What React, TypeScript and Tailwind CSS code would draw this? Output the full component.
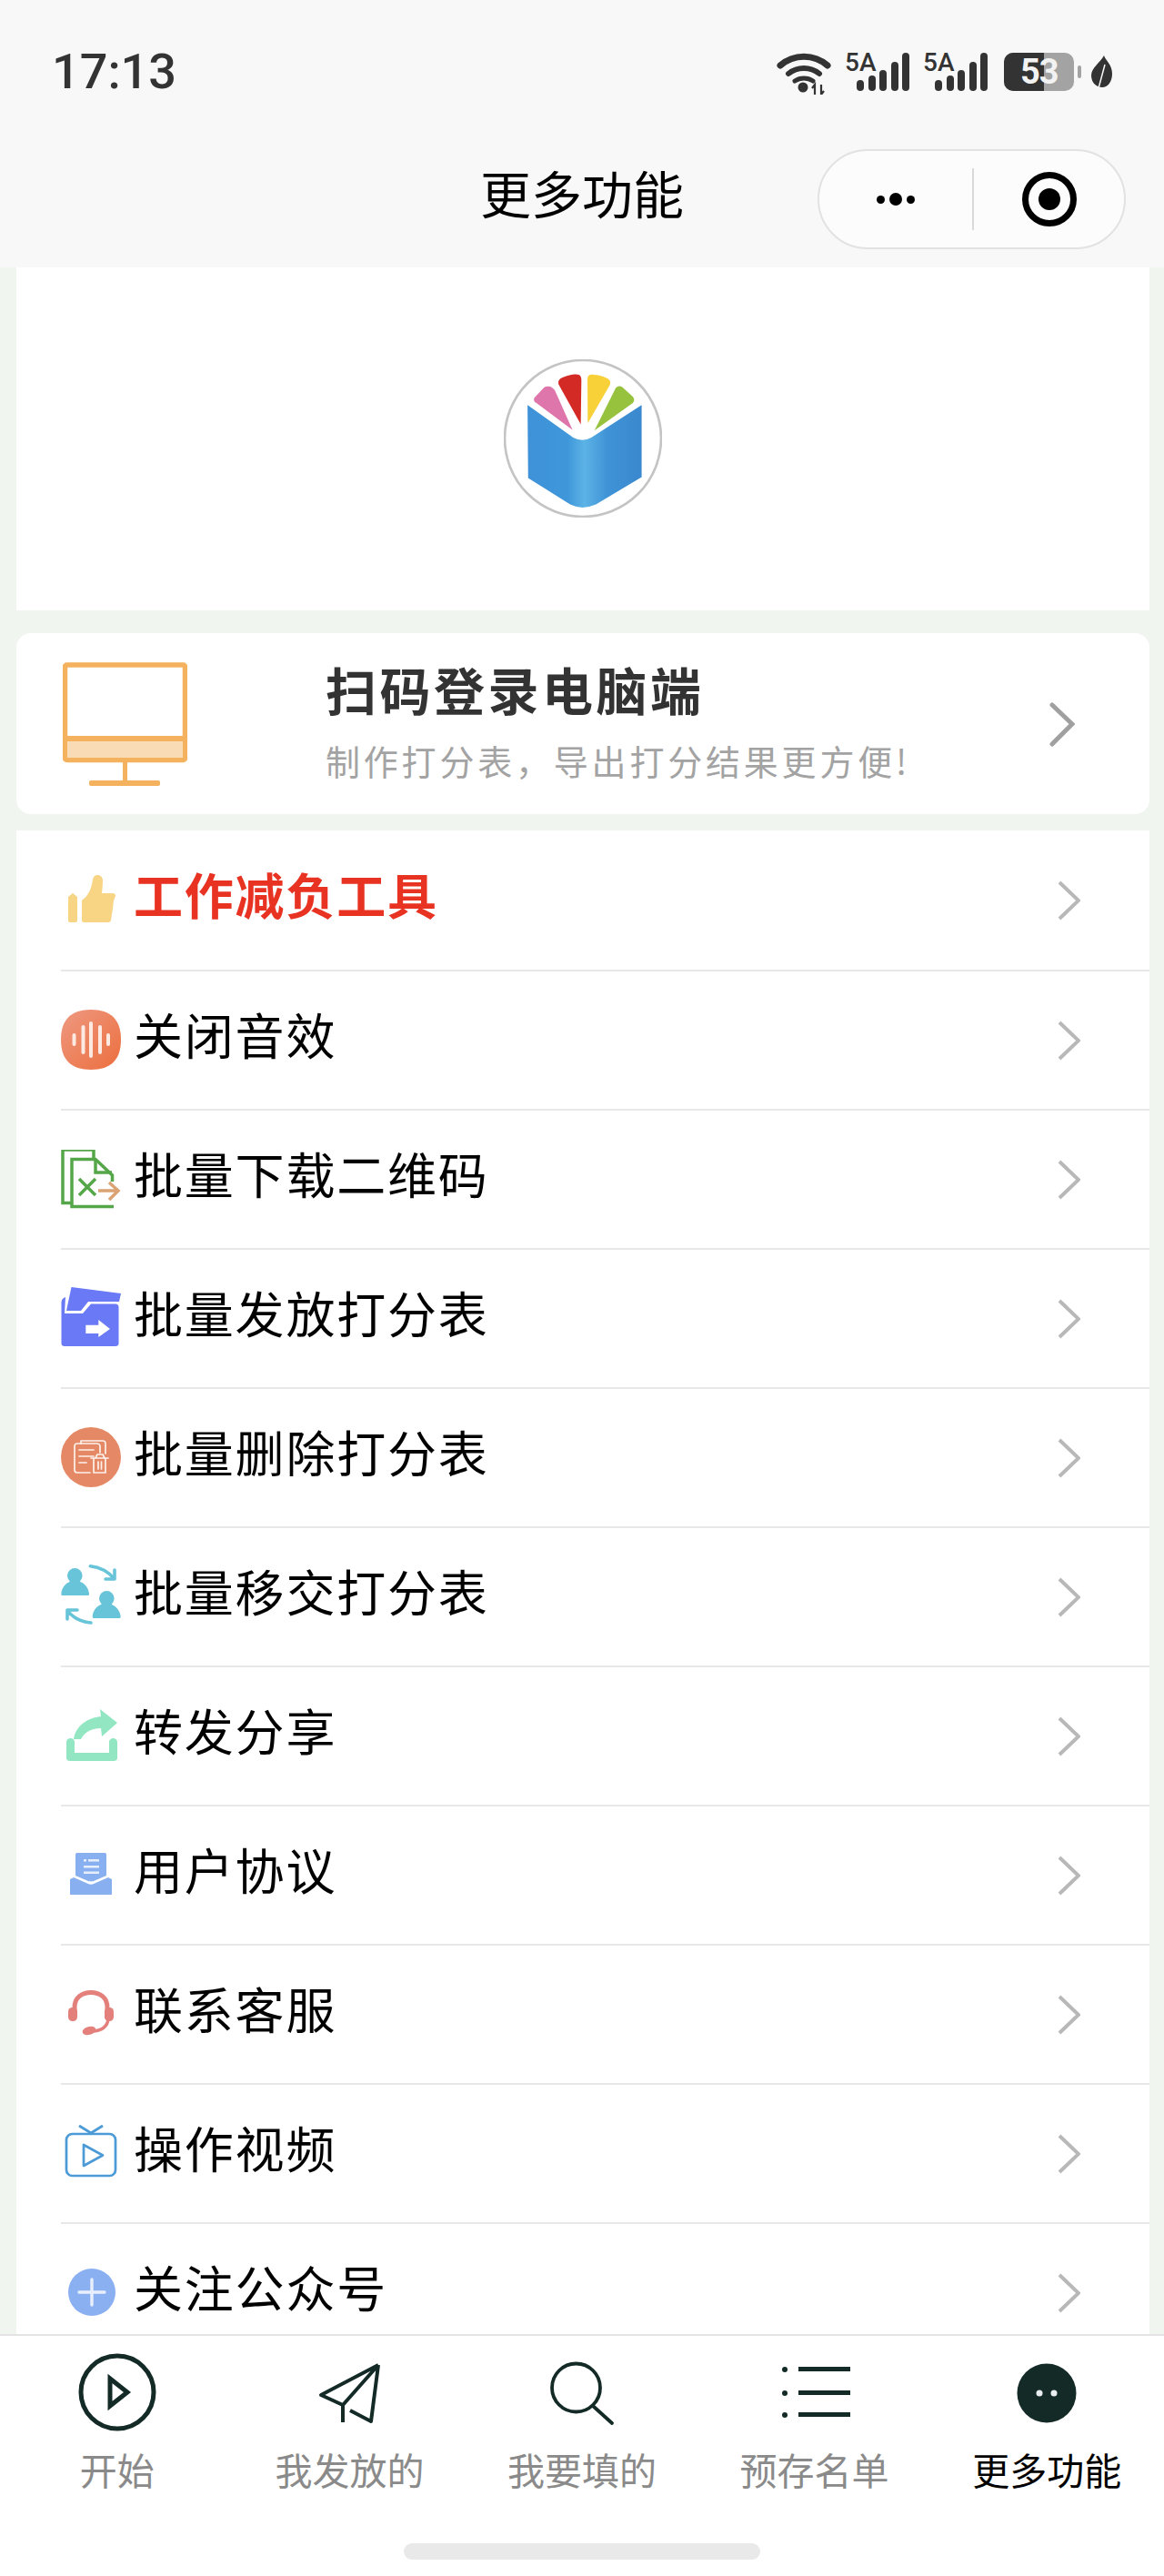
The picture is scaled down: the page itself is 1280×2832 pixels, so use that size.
import type { ReactNode } from 'react';

const CJK = 'font-["Noto_Sans_CJK_SC","Noto_Sans",sans-serif]';

function Chevron({ large = false }: { large?: boolean }) {
  if (large) {
    return (
      <svg viewBox="0 0 28 49" className="h-[49px] w-[28px]" fill="none" stroke="#a0a0a0" strokeWidth="5">
        <path d="M3 3l22 21L3 46" strokeLinecap="round" strokeLinejoin="miter" />
      </svg>
    );
  }
  return (
    <svg viewBox="0 0 25 44" className="h-[44px] w-[25px]" fill="none" stroke="#b8b8b8" strokeWidth="4">
      <path d="M2 2l21 20L2 42" strokeLinejoin="miter" />
    </svg>
  );
}

function ThumbIcon() {
  return (
    <svg viewBox="0 0 66 66" className="h-[66px] w-[66px]" fill="#f7d585">
      <path d="M8 29l5-4 5 4v26c0 1-1 2-2 2h-6c-1 0-2-1-2-2z" />
      <path d="M23 33c6-5 10-10 12-23 .5-3 2-5 5-5s6 2 6 6c0 5-.500 10-1 14h12c2 0 3 1 3 3l-2 5-1 9-1 6-1 7c-.5 1-1.500 2-3 2H25c-1 0-2-1-2-2z" />
    </svg>
  );
}

function SoundIcon() {
  return (
    <svg viewBox="0 3 66 66" className="h-[66px] w-[66px] overflow-visible">
      <defs>
        <linearGradient id="snd" x1="0" y1="0" x2="1" y2="1">
          <stop offset="0" stopColor="#ee9880" />
          <stop offset="1" stopColor="#ec6f3e" />
        </linearGradient>
      </defs>
      <path d="M33 2c22 0 33 11 33 33S55 68 33 68 0 57 0 35 11 2 33 2z" fill="url(#snd)" />
      <g fill="#fbe9e2">
        <rect x="12.500" y="28" width="4" height="14" rx="2" />
        <rect x="22.500" y="19" width="4" height="32" rx="2" />
        <rect x="31" y="15" width="4" height="40" rx="2" />
        <rect x="41" y="19" width="4" height="32" rx="2" />
        <rect x="50" y="28" width="4" height="14" rx="2" />
      </g>
    </svg>
  );
}

function ExcelIcon() {
  return (
    <svg viewBox="0 2 66 66" className="h-[66px] w-[66px]" fill="none">
      <path d="M11 60.500H2V2h34v10" stroke="#55a648" strokeWidth="3.500" />
      <path d="M58 64.500H12V12.500h26L56.500 30v7" stroke="#55a648" strokeWidth="3.500" />
      <path d="M38 12v15h18" stroke="#55a648" strokeWidth="3.500" />
      <path d="M20 34l18 18M38 34L20 52" stroke="#55a648" strokeWidth="3.500" />
      <path d="M41 47h22M53 38l10 9-10 10" stroke="#dba373" strokeWidth="3.500" />
    </svg>
  );
}

function FolderIcon() {
  return (
    <svg viewBox="0 0 66 66" className="h-[66px] w-[66px] overflow-visible">
      <path d="M11.500-2L66 5l-2 9H30l-8 10H6z" fill="#6a79f5" />
      <path d="M5 9C2 10 .5 12 .5 15v45c0 2 1.500 3 3.500 3h56c2 0 3.500-1 3.500-3V20c0-2-1.500-3.500-3.500-3.500H33L24 27H4z" fill="#6a79f5" />
      <path d="M27.300 39.700h14V34L54 44l-12.700 9v-4h-14z" fill="#fff" />
    </svg>
  );
}

function TrashDocIcon() {
  return (
    <svg viewBox="0 3 66 66" className="h-[66px] w-[66px] overflow-visible" fill="none">
      <circle cx="33" cy="35" r="33" fill="#e58865" />
      <g stroke="#fdf1ea" strokeWidth="1.700" strokeLinecap="round" strokeLinejoin="round">
        <path d="M22 20v-3h24c2 0 3 1 3 3v11" />
        <path d="M32 52H18c-2 0-3-1-3-3V23c0-2 1-3 3-3h21c3 0 4 1 4 3v7" />
        <path d="M20 27h16M20 34h16M20 41h8" />
        <path d="M33 36h19M38 36l2-4h6l2 4M36 36v16h13V36M41 40v8M44.500 40v8" />
      </g>
    </svg>
  );
}

function SwapIcon() {
  return (
    <svg viewBox="0 0 66 66" className="h-[66px] w-[66px] overflow-visible" fill="none">
      <g fill="#68c4d8">
        <circle cx="15.300" cy="9.300" r="8.300" />
        <path d="M.3 29C1 21 7 15 15.500 15S30 21 31 29c0 1.500-.5 2-1.500 2h-28C.8 31 .3 30.500.3 29z" />
        <circle cx="50.300" cy="34.300" r="8.300" />
        <path d="M34.700 54c.7-8 6.700-14 15.200-14S64.700 46 65.700 54c0 1.500-.5 2-1.500 2h-28c-.7 0-1.500-.5-1.500-2z" />
      </g>
      <g stroke="#68c4d8" strokeWidth="3.600" strokeLinecap="round" strokeLinejoin="round">
        <path d="M32.300-1.300C44 0 53 6 58.500 12.500M59 3v10H49" />
        <path d="M33 61C21 60 12 54 7 47.700M7 57V47h11" />
      </g>
    </svg>
  );
}

function ShareIcon() {
  return (
    <svg viewBox="0 0 66 66" className="h-[66px] w-[66px]" fill="#92e6c2">
      <path d="M14 36c2-14 14-23 30-25l-1-8 19 15-17 15-1-9c-10 0-18 4-22 12z" />
      <path d="M10.500 35c2.500 0 4.500 2 4.500 4v12h38V39c0-2 2.500-4 4.500-4 2.500 0 4.500 2 4.500 4v18c0 2-2 3-4 3H10c-2 0-4-1-4-3V39c0-2 2-4 4.500-4z" />
    </svg>
  );
}

function AgreementIcon() {
  return (
    <svg viewBox="0 0 66 66" className="h-[66px] w-[66px]">
      <path d="M16 10c0-1.500 1-2 2-2h30c1 0 2 .5 2 2v23l-14 6c-1 .5-5 .5-6 0l-14-6z" fill="#88aff0" />
      <path d="M10 37l4-2 16 7c2 1 4 1 6 0l16-7 4 2v17H10z" fill="#88aff0" />
      <g fill="#e8effc">
        <rect x="25" y="15" width="3" height="2.500" />
        <rect x="30" y="15" width="12" height="2.500" />
        <rect x="25" y="22" width="17" height="2.500" />
        <rect x="25" y="28.500" width="17" height="2.500" />
      </g>
    </svg>
  );
}

function HeadsetIcon() {
  return (
    <svg viewBox="0 0 66 66" className="h-[66px] w-[66px]" fill="none">
      <path d="M15 30v-5C15 14 23 8.500 33 8.500S51 14 51 25v5" stroke="#e4807b" strokeWidth="5" />
      <rect x="8" y="25" width="10" height="15" rx="4.500" fill="#e4807b" />
      <rect x="48" y="25" width="10" height="15" rx="4.500" fill="#e4807b" />
      <path d="M52 38c-1 8-7 12-16 13" stroke="#e4807b" strokeWidth="3.500" />
      <ellipse cx="31" cy="50.500" rx="7.500" ry="4.500" fill="#e4807b" transform="rotate(-15 31 50.500)" />
    </svg>
  );
}

function VideoIcon() {
  return (
    <svg viewBox="0 0 66 66" className="h-[66px] w-[66px]" fill="none" stroke="#4c9ad6" strokeWidth="2.700" strokeLinejoin="round">
      <rect x="6" y="11" width="54" height="46" rx="6.500" />
      <path d="M20 2l13 8 13-8" />
      <path d="M25 23v23l21-11.500z" />
    </svg>
  );
}

function PlusIcon() {
  return (
    <svg viewBox="0 0 66 66" className="h-[66px] w-[66px]">
      <circle cx="34" cy="32" r="26" fill="#8ab0f2" />
      <path d="M34 18v28M20 32h28" stroke="#e8effc" strokeWidth="3.400" strokeLinecap="round" />
    </svg>
  );
}

const rows: { label: string; icon: ReactNode; highlight?: boolean }[] = [
  { label: '工作减负工具', icon: <ThumbIcon />, highlight: true },
  { label: '关闭音效', icon: <SoundIcon /> },
  { label: '批量下载二维码', icon: <ExcelIcon /> },
  { label: '批量发放打分表', icon: <FolderIcon /> },
  { label: '批量删除打分表', icon: <TrashDocIcon /> },
  { label: '批量移交打分表', icon: <SwapIcon /> },
  { label: '转发分享', icon: <ShareIcon /> },
  { label: '用户协议', icon: <AgreementIcon /> },
  { label: '联系客服', icon: <HeadsetIcon /> },
  { label: '操作视频', icon: <VideoIcon /> },
  { label: '关注公众号', icon: <PlusIcon /> },
];

function Signal() {
  return (
    <div className="relative ml-[15px] h-[42px] w-[71px]">
      <span className='absolute left-0 top-[-4px] font-["Roboto",sans-serif] text-[28px] leading-[30px] font-medium text-[#333]'>5A</span>
      <div className="absolute bottom-0 right-0 flex items-end gap-[4.500px]">
        <div className="h-[12px] w-[8px] rounded-full bg-[#333]" />
        <div className="h-[17px] w-[8px] rounded-full bg-[#333]" />
        <div className="h-[23px] w-[8px] rounded-full bg-[#333]" />
        <div className="h-[32px] w-[8px] rounded-full bg-[#333]" />
        <div className="h-[42px] w-[8px] rounded-full bg-[#333]" />
      </div>
    </div>
  );
}

function StatusBar() {
  return (
    <div className="flex h-[158px] items-start justify-between pl-[57px] pr-[57px] pt-[49px]">
      <span className='font-["Roboto",sans-serif] text-[54px] leading-[60px] font-medium text-[#333]'>17:13</span>
      <div className="mt-[9px] flex items-start">
        <svg viewBox="0 0 60 46" className="h-[46px] w-[60px]" fill="none" stroke="#333">
          <path d="M4 14c15-13 37-13 52 0" strokeWidth="7" strokeLinecap="round" />
          <path d="M13 23c10-8 24-8 34 0" strokeWidth="6" strokeLinecap="round" />
          <path d="M20 31c6-4 14-4 20 0" strokeWidth="5" strokeLinecap="round" />
          <circle cx="29" cy="38" r="5.500" fill="#333" stroke="none" />
          <path d="M42 46V35l-3 4M49 35v11l3-4" strokeWidth="2.200" />
        </svg>
        <Signal />
        <Signal />
        <div className="relative ml-[18px] h-[42px] w-[77px] overflow-hidden rounded-[10px] bg-[#a3a3a3]">
          <div className="h-full w-[44px] bg-[#333]" />
          <span className='absolute inset-0 pl-[18px] font-["Roboto",sans-serif] text-[38px] leading-[42px] font-bold tracking-[-1px] text-[#f2f2f2]'>53</span>
        </div>
        <div className="ml-[4px] mt-[14px] h-[14px] w-[4px] rounded-full bg-[#a3a3a3]" />
        <svg viewBox="0 0 23 36" className="ml-[11px] mt-[3px] h-[36px] w-[23px]">
          <path d="M14 0c2 6 9 10 9 20 0 9-5 15-11 15S0 30 0 22C0 13 10 8 14 0z" fill="#333" />
          <path d="M15 10L8 36" stroke="#f8f8f8" strokeWidth="1.500" />
        </svg>
      </div>
    </div>
  );
}

function NavBar() {
  return (
    <div className="relative flex h-[136px] items-start justify-center pt-[17px]">
      <h1 className={`${CJK} text-[56px] leading-[72px] font-normal text-black`}>更多功能</h1>
      <div className="absolute left-[899px] top-[6px] flex h-[110px] w-[339px] items-center rounded-full border-2 border-[#e2e2e2] bg-[#fcfcfc]">
        <div className="flex h-[68px] w-[170px] items-center justify-center gap-[5px] border-r-2 border-[#d9d9d9]">
          <div className="h-[9px] w-[9px] rounded-full bg-black" />
          <div className="h-[14px] w-[14px] rounded-full bg-black" />
          <div className="h-[9px] w-[9px] rounded-full bg-black" />
        </div>
        <div className="flex h-[68px] flex-1 items-center justify-center">
          <div className="flex h-[60px] w-[60px] items-center justify-center rounded-full border-[7px] border-black">
            <div className="h-[24px] w-[24px] rounded-full bg-black" />
          </div>
        </div>
      </div>
    </div>
  );
}

function Logo() {
  return (
    <svg viewBox="72 48 520 520" className="h-[174px] w-[174px]">
      <defs>
        <linearGradient id="book" x1="0" y1="0" x2="1" y2="0">
          <stop offset="0" stopColor="#3f92d8" />
          <stop offset="0.35" stopColor="#3f97da" />
          <stop offset="0.5" stopColor="#5cb3e6" />
          <stop offset="0.7" stopColor="#3f93d6" />
          <stop offset="1" stopColor="#3a88cf" />
        </linearGradient>
      </defs>
      <circle cx="332" cy="308" r="257" fill="#fff" stroke="#c4c4c4" strokeWidth="8" />
      <path d="M150 198L300 305Q330 322 360 305L525 198V435L375 525Q330 545 290 525L152 438Z" fill="url(#book)" />
      <path d="M172 175Q168 188 180 192L298 280L240 150Q225 130 205 140Z" fill="#de76ab" />
      <path d="M252 130Q248 115 265 108Q295 95 315 98Q327 100 327 115L325 262Z" fill="#d42a26" />
      <path d="M347 112Q347 98 362 98Q395 100 415 112Q426 120 420 133L348 258Z" fill="#f8d038" />
      <path d="M440 142Q450 132 462 140L495 170Q506 182 495 192L370 282Z" fill="#96c23e" />
    </svg>
  );
}

function TabBar() {
  const tabs = [
    { label: '开始', active: false, icon: (
      <svg viewBox="0 0 90 90" className="h-[90px] w-[90px]" fill="none" stroke="#132a26" strokeWidth="5">
        <circle cx="45" cy="46" r="40" />
        <path d="M37 31v30l19-15z" strokeLinejoin="miter" />
      </svg>
    ) },
    { label: '我发放的', active: false, icon: (
      <svg viewBox="0 0 90 90" className="h-[90px] w-[90px]" fill="none" stroke="#132a26" strokeWidth="4" strokeLinejoin="round">
        <path d="M77 16L14 49l24 11M77 16L38 60v19M77 16l-8 62-23-12" />
      </svg>
    ) },
    { label: '我要填的', active: false, icon: (
      <svg viewBox="0 0 90 90" className="h-[90px] w-[90px]" fill="none" stroke="#132a26" strokeWidth="3.800">
        <circle cx="38.500" cy="41" r="26.500" />
        <path d="M57 61l21 19" strokeLinecap="round" />
      </svg>
    ) },
    { label: '预存名单', active: false, icon: (
      <svg viewBox="0 0 90 90" className="h-[90px] w-[90px]" fill="#132a26">
        <circle cx="12" cy="21" r="3" />
        <rect x="27" y="18" width="57" height="5" />
        <circle cx="12" cy="47" r="3" />
        <rect x="27" y="44" width="57" height="5" />
        <circle cx="12" cy="71" r="3" />
        <rect x="27" y="68" width="57" height="5" />
      </svg>
    ) },
    { label: '更多功能', active: true, icon: (
      <svg viewBox="0 0 90 90" className="h-[90px] w-[90px]">
        <circle cx="45" cy="47" r="32.500" fill="#132a26" />
        <circle cx="37" cy="47" r="3.500" fill="#e8eeee" />
        <circle cx="53" cy="47" r="3.500" fill="#e8eeee" />
      </svg>
    ) },
  ];
  return (
    <div className="relative h-[266px] border-t-2 border-[#e3e3e3] bg-white">
      <div className="grid grid-cols-5 px-[1px] pt-[16px]">
        {tabs.map((tab) => (
          <div key={tab.label} className="flex flex-col items-center">
            {tab.icon}
            <span className={`${CJK} mt-[12px] text-[41px] leading-[56px] ${tab.active ? 'text-black' : 'text-[#8a8a8a]'}`}>
              {tab.label}
            </span>
          </div>
        ))}
      </div>
      <div className="absolute left-[444px] top-[228px] h-[18px] w-[392px] rounded-full bg-[#e9e9e9]" />
    </div>
  );
}

export default function App() {
  return (
    <div className={`${CJK} flex h-[2832px] w-[1280px] flex-col overflow-hidden bg-[#f0f5f0]`}>
      <div className="bg-[#f8f8f8]">
        <StatusBar />
        <NavBar />
      </div>

      <div className="flex min-h-0 flex-1 flex-col overflow-hidden pl-[18px] pr-[16px]">
        {/* Logo */}
        <div className="flex h-[377px] items-start justify-center bg-white pt-[101px]">
          <Logo />
        </div>

        {/* Desktop login */}
        <div className="mt-[25px] flex h-[199px] shrink-0 items-center rounded-[16px] bg-white">
          <svg viewBox="0 0 137 136" className="ml-[51px] h-[136px] w-[137px] shrink-0" fill="none">
            <rect x="2.500" y="3" width="132" height="104.500" rx="2" fill="#fff" stroke="#f4b25e" strokeWidth="5.500" />
            <rect x="5" y="86" width="127" height="19" fill="#f9dcb5" />
            <rect x="3" y="81" width="131" height="6" fill="#f4b25e" />
            <rect x="66" y="109" width="5" height="22" fill="#f4b25e" />
            <rect x="29" y="130" width="78" height="6" rx="2" fill="#f4b25e" />
          </svg>
          <div className="mb-[10px] ml-[152px] flex-1">
            <div className="text-[56px] leading-[72px] font-bold tracking-[3.500px] text-[#333]">扫码登录电脑端</div>
            <div className="mt-[18px] text-[38px] leading-[50px] tracking-[3.800px] text-[#a3a3a3]">制作打分表，导出打分结果更方便!</div>
          </div>
          <div className="mr-[82px] mt-[2px]">
            <Chevron large />
          </div>
        </div>

        {/* Menu */}
        <div className="mt-[18px] min-h-0 flex-1 overflow-hidden bg-white">
          {rows.map((row, i) => (
            <div key={row.label} className={`ml-[49px] flex h-[153px] items-center pr-[76px] ${i > 0 ? 'border-t-2 border-[#e8e8e8]' : ''}`}>
              <div className="mr-[14px] shrink-0">{row.icon}</div>
              <span className={`mb-[13px] flex-1 text-[54px] leading-[72px] tracking-[1.800px] ${row.highlight ? 'font-bold text-[#e83323]' : 'text-black'}`}>
                {row.label}
              </span>
              <Chevron />
            </div>
          ))}
        </div>
      </div>

      <TabBar />
    </div>
  );
}
